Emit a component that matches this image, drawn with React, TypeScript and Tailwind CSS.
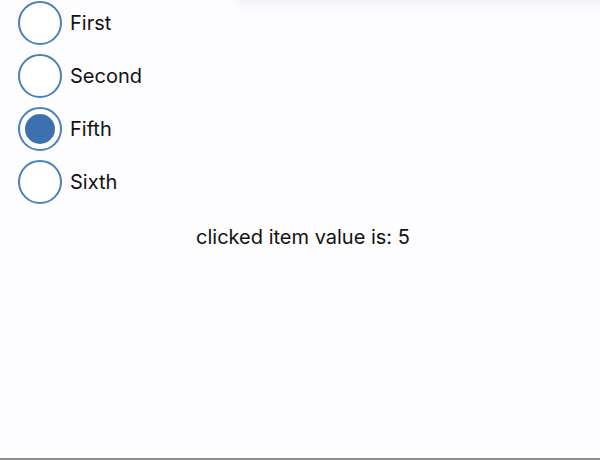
import { useState } from "react"

const items = [
  { label: "First", value: 1 },
  { label: "Second", value: 2 },
  { label: "Fifth", value: 5 },
  { label: "Sixth", value: 6 },
]

export default function App() {
  const [selected, setSelected] = useState(5)

  return (
    <div className="relative flex h-[460px] w-[600px] flex-col overflow-hidden border-b-2 border-[#8a8a8a] bg-[#fdfcfe] font-['Inter',sans-serif] text-[#111]">
      <div className="absolute top-[-7px] right-[-20px] left-[235px] h-[12px] rounded-full bg-[#f1f0f4] blur-[4px]" />
      <div className="relative flex flex-col gap-[9px] pt-[1px] pl-[18px]">
        {items.map((item) => (
          <button
            key={item.value}
            onClick={() => setSelected(item.value)}
            className="flex h-[44px] items-center gap-[8px] text-left"
          >
            <span className="flex h-[44px] w-[44px] items-center justify-center rounded-full border-2 border-[#4a80b8] bg-white">
              {selected === item.value && <span className="h-[30px] w-[30px] rounded-full bg-[#3b72ad]" />}
            </span>
            <span className="text-[20px] leading-none">{item.label}</span>
          </button>
        ))}
      </div>
      <p className="mt-[21px] pl-[6px] text-center text-[20px] leading-[24px]">clicked item value is: {selected}</p>
    </div>
  )
}
